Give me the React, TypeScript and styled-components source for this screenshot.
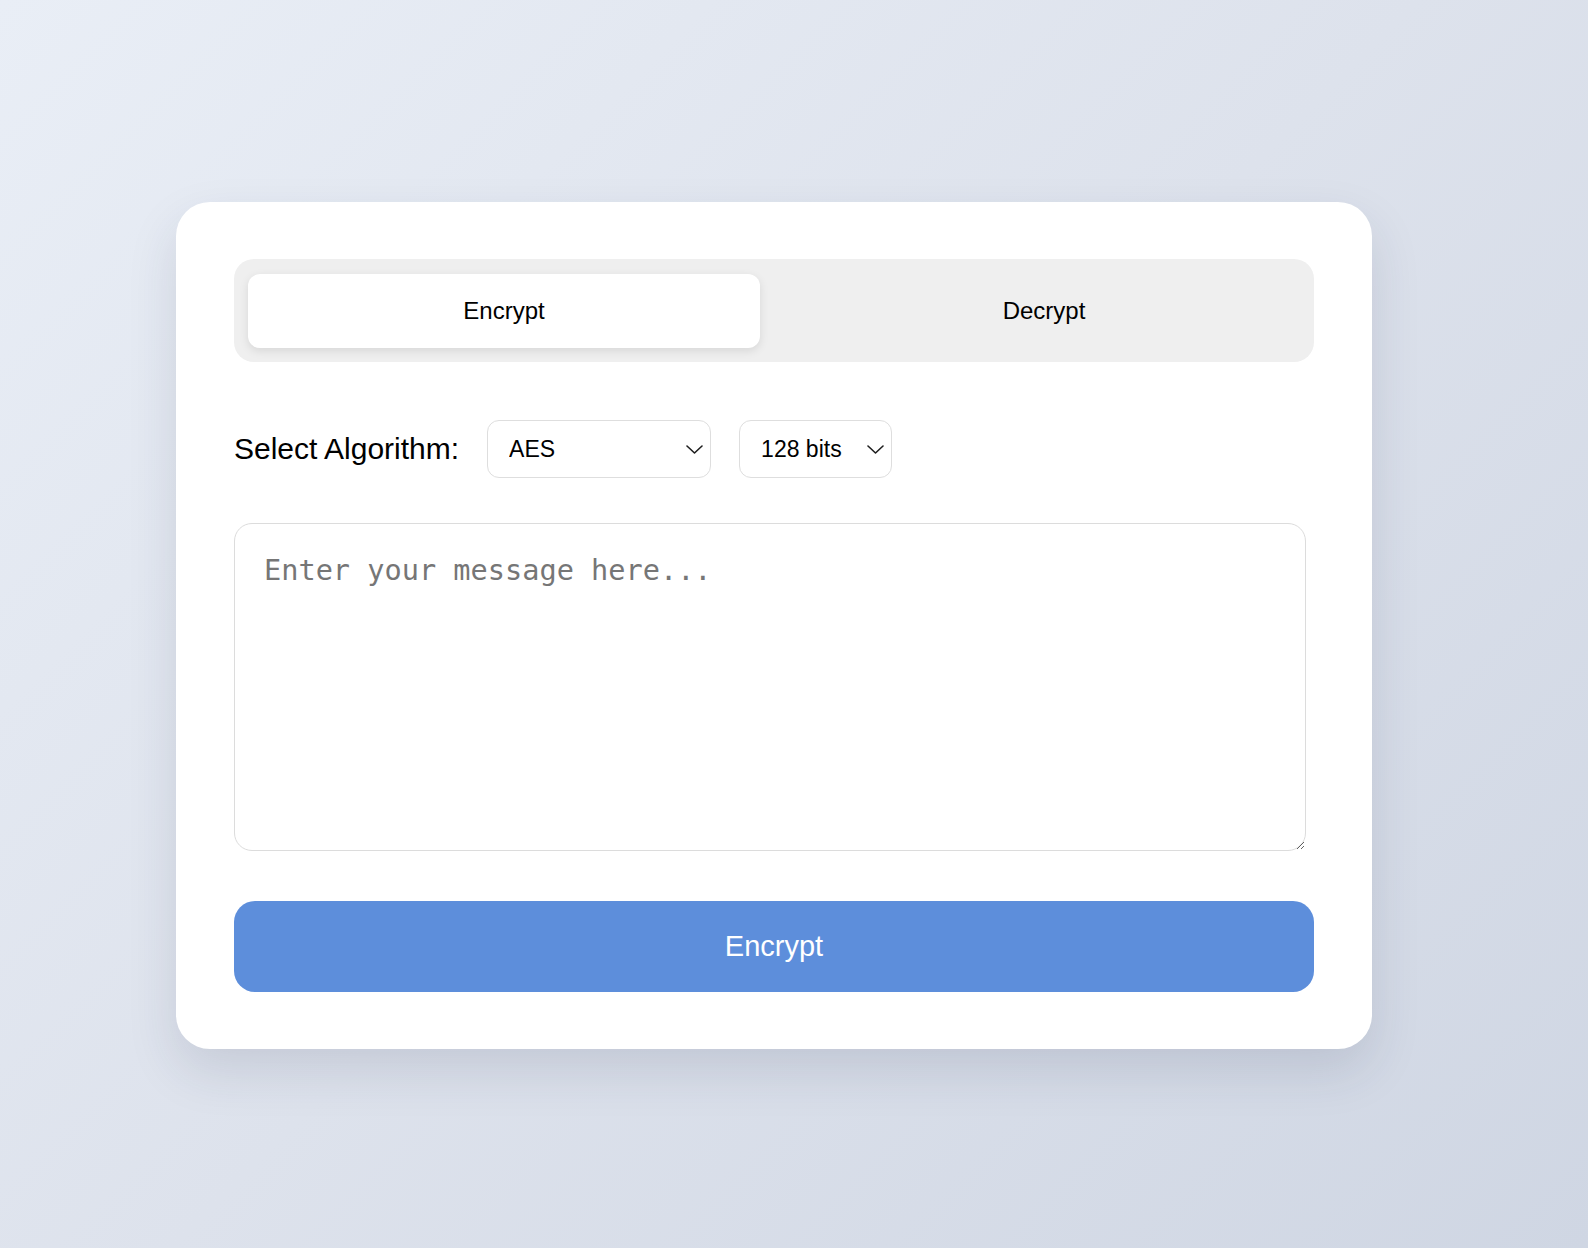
import styled, { createGlobalStyle } from "styled-components";
import { useState } from "react";

const GlobalStyle = createGlobalStyle`
    * { box-sizing: border-box; }
    html, body { margin: 0; padding: 0; }
    body {
        font-family: "Liberation Sans", Arial, sans-serif;
        color: #000;
    }
`;

const Chevron = () => (
    <svg width="17" height="9" viewBox="0 0 17 9" fill="none">
        <path d="M1 1l7.5 7 7.5-7" stroke="#1e1e1e" strokeWidth="1.6" strokeLinecap="round" strokeLinejoin="round" />
    </svg>
);

export default function App() {
    const [mode, setMode] = useState<"encrypt" | "decrypt">("encrypt");
    const [algo, setAlgo] = useState("AES");
    const [bits, setBits] = useState("128");
    const [message, setMessage] = useState("");

    return (
        <>
            <GlobalStyle />
            <Page>
                <Card>
                    <Tabs>
                        <Tab $active={mode === "encrypt"} onClick={() => setMode("encrypt")}>Encrypt</Tab>
                        <Tab $active={mode === "decrypt"} onClick={() => setMode("decrypt")}>Decrypt</Tab>
                    </Tabs>

                    <AlgoRow>
                        <Label>Select Algorithm:</Label>
                        <SelectBox $width={224}>
                            <Select value={algo} onChange={e => setAlgo(e.target.value)}>
                                <option value="AES">AES</option>
                                <option value="DES">DES</option>
                                <option value="RSA">RSA</option>
                            </Select>
                            <ArrowIcon><Chevron /></ArrowIcon>
                        </SelectBox>
                        <SelectBox $width={153}>
                            <Select value={bits} onChange={e => setBits(e.target.value)}>
                                <option value="128">128 bits</option>
                                <option value="192">192 bits</option>
                                <option value="256">256 bits</option>
                            </Select>
                            <ArrowIcon><Chevron /></ArrowIcon>
                        </SelectBox>
                    </AlgoRow>

                    <Message
                        placeholder="Enter your message here..."
                        value={message}
                        onChange={e => setMessage(e.target.value)}
                    />

                    <SubmitButton>{mode === "encrypt" ? "Encrypt" : "Decrypt"}</SubmitButton>
                </Card>
            </Page>
        </>
    );
}

const Page = styled.main`
    min-height: 100vh;
    display: flex;
    align-items: center;
    justify-content: center;
    padding: 3px 40px 0 0;
    background: linear-gradient(135deg, #e9eef6 0%, #dde2ec 50%, #cfd6e3 100%);
`;

const Card = styled.section`
    width: 1196px;
    background: #fff;
    border-radius: 34px;
    padding: 57px 58px;
    display: flex;
    flex-direction: column;
    box-shadow: 0 22px 50px rgba(40, 50, 80, 0.13);
`;

const Tabs = styled.div`
    display: flex;
    gap: 28px;
    padding: 15px 14px 14px;
    background: #efefef;
    border-radius: 20px;
`;

const Tab = styled.button<{ $active: boolean }>`
    flex: 1;
    height: 74px;
    border: none;
    border-radius: 12px;
    font-family: "Liberation Sans", Arial, sans-serif;
    font-size: 24px;
    color: #000;
    cursor: pointer;
    background: ${p => (p.$active ? "#fff" : "transparent")};
    box-shadow: ${p => (p.$active ? "0 3px 10px rgba(0, 0, 0, 0.1)" : "none")};
`;

const AlgoRow = styled.div`
    display: flex;
    align-items: center;
    gap: 28px;
    margin-top: 58px;
`;

const Label = styled.label`
    font-size: 30px;
    color: #000;
`;

const SelectBox = styled.div<{ $width: number }>`
    position: relative;
    width: ${p => p.$width}px;
    height: 58px;
`;

const Select = styled.select`
    appearance: none;
    width: 100%;
    height: 100%;
    padding: 0 36px 0 21px;
    border: 1px solid #dedede;
    border-radius: 12px;
    background: #fff;
    font-family: "Liberation Sans", Arial, sans-serif;
    font-size: 23px;
    color: #000;
    outline: none;
`;

const ArrowIcon = styled.span`
    position: absolute;
    right: 8px;
    top: 25px;
    display: flex;
    pointer-events: none;
`;

const Message = styled.textarea`
    display: block;
    width: calc(100% - 8px);
    height: 328px;
    margin-top: 45px;
    padding: 29px;
    border: 1px solid #dcdcdc;
    border-radius: 18px;
    font-family: "DejaVu Sans Mono", "Liberation Mono", monospace;
    font-size: 28.6px;
    color: #222;
    outline: none;

    &::placeholder {
        color: #767676;
    }
`;

const SubmitButton = styled.button`
    margin-top: 50px;
    width: 100%;
    height: 91px;
    border: none;
    border-radius: 21px;
    background: #5d8edb;
    color: #fff;
    font-family: "Liberation Sans", Arial, sans-serif;
    font-size: 29px;
    cursor: pointer;
`;
